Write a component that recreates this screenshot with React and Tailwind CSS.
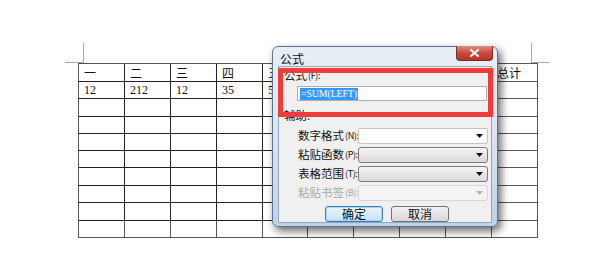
import React from 'react';

const cjk = { fontFamily: '"Noto Sans CJK SC", "Liberation Sans", sans-serif' };
const serif = { fontFamily: '"Liberation Serif", "Noto Sans CJK SC", serif' };

const colWidths = [46, 46, 46, 46, 45, 46, 46, 46, 46, 46];
const rowHeights = [18, 17, 18, 17, 17, 17, 18, 17, 18, 17];

const header = ['一', '二', '三', '四', '五', '', '', '', '', '总计'];
const values = ['12', '212', '12', '35', '5', '', '', '', '', ''];

const Arrow = ({ light }) => (
  <svg width="7" height="4" viewBox="0 0 7 4" className="mr-[4px]">
    <path d="M0 0h7L3.5 4z" fill={light ? '#b5b5b5' : '#111'} />
  </svg>
);

const Select = ({ variant }) => {
  if (variant === 'white') {
    return (
      <div className="flex h-[16px] w-[130px] items-center justify-end rounded-[2px] border border-[#c5c5c5] bg-white">
        <Arrow />
      </div>
    );
  }
  if (variant === 'disabled') {
    return (
      <div className="flex h-[16px] w-[130px] items-center justify-end rounded-[3px] border border-[#d5d5d5] bg-[#f4f4f4]">
        <Arrow light />
      </div>
    );
  }
  return (
    <div className="flex h-[16px] w-[130px] items-center justify-end rounded-[3px] border border-[#7a7a7a] bg-gradient-to-b from-[#f4f4f4] to-[#dadada]">
      <Arrow />
    </div>
  );
};

// label such as 数字格式(N): with a compact accelerator suffix
const Label = ({ text, keyChar, className = '' }) => (
  <span className={`flex items-center whitespace-nowrap leading-none ${className}`} style={cjk}>
    <span className="text-[11.5px]">{text}</span>
    <span className="ml-[1px] text-[9px] tracking-[-0.4px]">({keyChar}):</span>
  </span>
);

const Row = ({ label, keyChar, variant, muted }) => (
  <div className="flex h-[19px] items-center pl-[19px]">
    <div className="w-[60px]">
      <Label text={label} keyChar={keyChar} className={muted ? 'text-[#a8a8a8]' : 'text-[#111]'} />
    </div>
    <Select variant={variant} />
  </div>
);

const App = () => {
  return (
    <div className="relative h-[268px] w-[600px] overflow-hidden bg-white">
      <div className="pt-[43px]">
        {/* crop marks */}
        <div className="ml-[65px] flex h-[20px]">
          <div className="w-[19px] border-r border-b border-[#a8a8a8]" />
          <div className="w-[447px]" />
          <div className="w-[19px] border-b border-l border-[#a8a8a8]" />
        </div>

        {/* word table */}
        <div className="ml-[78px] w-[460px] border-t border-l border-[#555]">
          {rowHeights.map((h, r) => (
            <div key={r} className="flex" style={{ height: h }}>
              {colWidths.map((w, c) => (
                <div
                  key={c}
                  className={`flex items-center overflow-hidden border-r border-b pl-[5px] text-[12px] leading-none text-[#111] ${
                    c === 9 || r === 9 ? 'border-[#555]' : 'border-[#222]'
                  }`}
                  style={{ width: w, ...(r === 0 ? cjk : serif) }}
                >
                  {r === 0 ? header[c] : r === 1 ? values[c] : ''}
                </div>
              ))}
            </div>
          ))}
        </div>
      </div>

      {/* formula dialog */}
      <div className="absolute top-[46px] left-[272px] flex h-[181px] w-[226px] flex-col rounded-[6px] border border-[#60738c] bg-gradient-to-b from-[#e8eef5] via-[#d9e5f2] to-[#bcd3ec] px-[5px] pb-[3px] shadow-[3px_4px_8px_rgba(0,0,0,0.6)]">
        <div className="relative h-[21px]">
          <span className="absolute top-[6px] left-[2px] text-[12px] leading-none text-[#111]" style={cjk}>
            公式
          </span>
          <div className="absolute top-[-1px] right-[-1px] flex h-[15px] w-[37px] items-center justify-center rounded-b-[4px] border border-t-0 border-[#7a2a22] bg-gradient-to-b from-[#e08c7e] via-[#c8493a] to-[#b8362a]">
            <svg width="9" height="8" viewBox="0 0 9 8">
              <path d="M1 1l7 6M8 1L1 7" stroke="#fff" strokeWidth="2" strokeLinecap="square" />
            </svg>
          </div>
        </div>

        <div className="relative flex-1 border border-[#8fa6c0] bg-[#f0f0f0]">
          <div className="flex h-[14px] items-end pt-[3px] pl-[5px] text-[#111]">
            <Label text="公式" keyChar="F" />
          </div>
          <div className="mt-[5px] ml-[18px] flex h-[15px] w-[190px] items-center border border-[#abadb3] bg-white pl-[2px]">
            <span className="bg-[#3399ff] px-[1px] text-[10px] leading-[12px] tracking-[-0.2px] text-white" style={serif}>
              =SUM(LEFT)
            </span>
          </div>
          <div className="mt-[8px] pl-[5px] text-[11.5px] leading-[12px] text-[#111]" style={cjk}>
            辅助:
          </div>
          <div className="mt-[5px]">
            <Row label="数字格式" keyChar="N" variant="white" />
            <Row label="粘贴函数" keyChar="P" variant="gray" />
            <Row label="表格范围" keyChar="T" variant="gray" />
            <Row label="粘贴书签" keyChar="B" variant="disabled" muted />
          </div>
          <div className="mt-[4px] flex pl-[46px]">
            <div className="flex h-[16px] w-[58px] items-center justify-center rounded-[3px] border border-[#3c7fb1] bg-gradient-to-b from-[#eaf6fd] to-[#c4e3f5] text-[12px] leading-none text-[#111] shadow-[inset_0_0_0_1px_#a6d8f5]" style={cjk}>
              确定
            </div>
            <div className="ml-[8px] flex h-[16px] w-[58px] items-center justify-center rounded-[3px] border border-[#707070] bg-gradient-to-b from-[#f2f2f2] to-[#d8d8d8] text-[12px] leading-none text-[#111]" style={cjk}>
              取消
            </div>
          </div>
        </div>
      </div>

      {/* red annotation box */}
      <div className="absolute top-[68px] left-[278px] h-[49px] w-[215px] border-[5px] border-[#f03b3b]" />
    </div>
  );
};

export default App;
